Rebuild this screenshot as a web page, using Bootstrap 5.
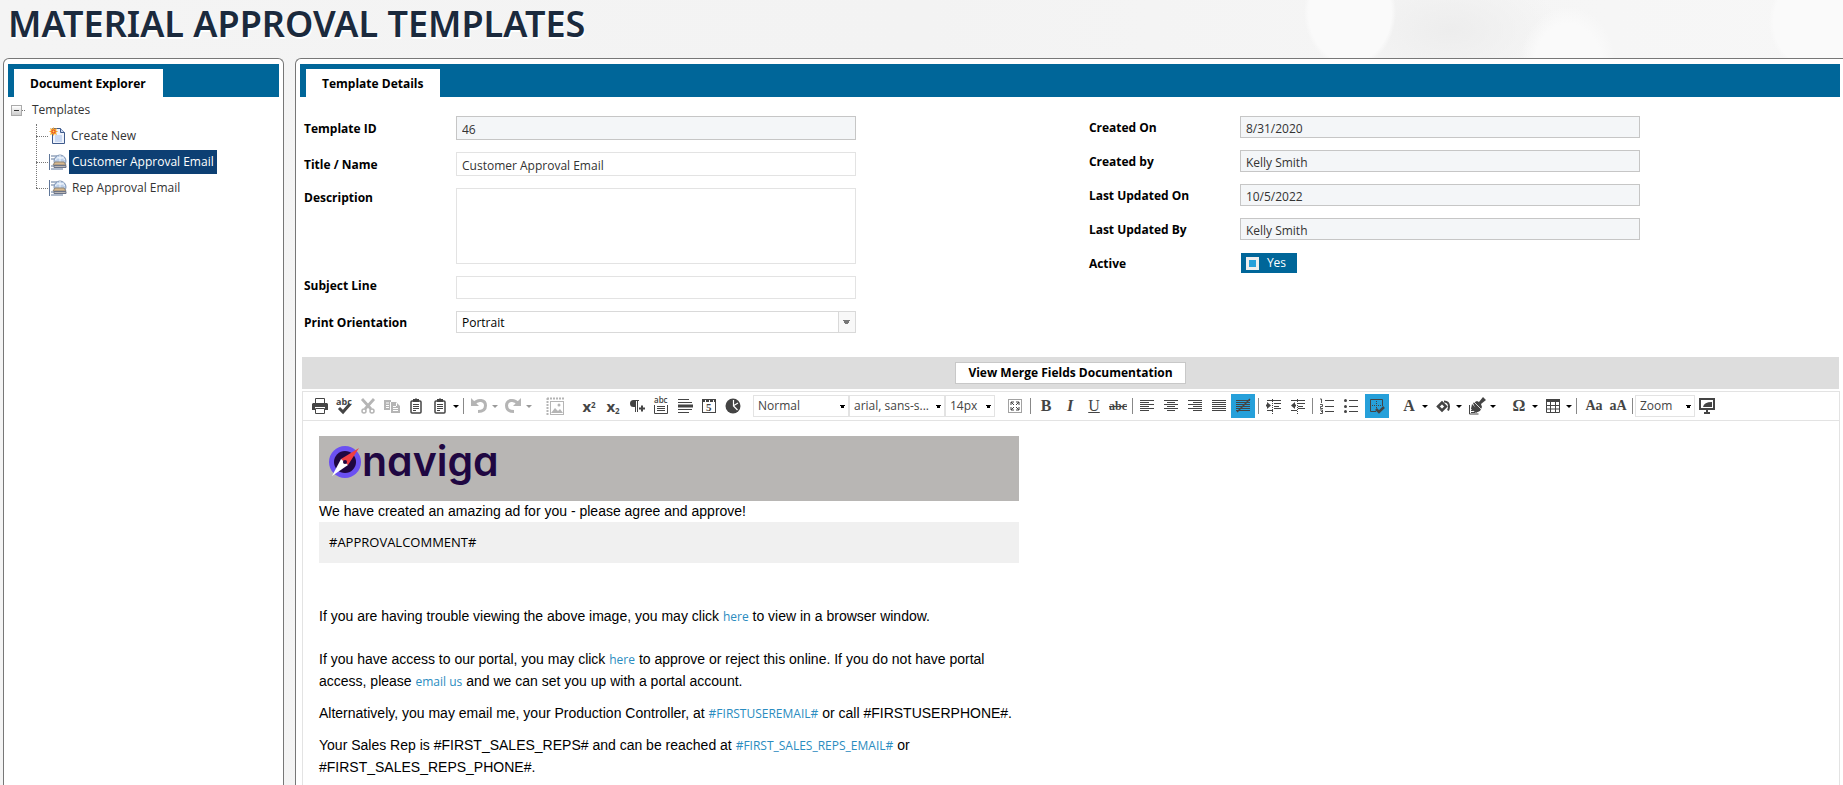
<!DOCTYPE html>
<html lang="en">
<head>
<meta charset="utf-8">
<meta name="viewport" content="width=device-width, initial-scale=1">
<title>Material Approval Templates</title>
<link href="https://cdn.jsdelivr.net/npm/bootstrap@5.3.0/dist/css/bootstrap.min.css" rel="stylesheet">
<style>
:root{--brand:#006699;--line:#e3e3e3;--ink:#444;--ui:"Open Sans","Noto Sans",sans-serif}
body{font-family:var(--ui);font-size:12px;line-height:18px;color:#333;
 background:
 radial-gradient(ellipse 46px 56px at 1350px 12px,#fafafa 90%,transparent),
 radial-gradient(ellipse 48px 60px at 1568px 66px,#fafafa 70%,transparent),
 radial-gradient(ellipse 46px 50px at 1815px 22px,#fafafa 90%,transparent),
 radial-gradient(ellipse 110px 60px at 1450px 30px,#ededed,transparent),
 linear-gradient(90deg,#f4f4f4,#f3f3f3 50%,#f7f7f7)}
.page-title{font-family:"Noto Sans",sans-serif;font-size:36px;line-height:48px;font-weight:600;color:#1b2a3d;text-shadow:1px 2px 0 #fff;white-space:nowrap;margin:0}
.title-box{height:58px;padding:0 8px;flex:none}
.pane{background:#fff;border:1px solid #777;border-bottom:0;border-radius:6px 6px 0 0;padding:5px 4px 0}
.pane-left{width:281px;flex:none;margin-left:3px}
.pane-main{margin-left:11px;border-right:0;border-top-right-radius:0;padding-right:0}
.tabstrip{background:var(--brand);height:33px;padding:5px 6px 0}
.pane-main .tabstrip{margin-right:3px}
.tabstrip .nav-link{background:#fff;color:#000;font-weight:700;height:28px;line-height:30px;padding:0 17px 0 16px;border:0;border-radius:0;font-size:12px}
/* tree */
.tree ul{list-style:none;margin:0;padding:0 0 0 28px;position:relative}
.tree-root{height:26px;padding-left:3px;display:flex;align-items:center}
.tree li.leaf{height:26px;display:flex;align-items:center}
.tree li.leaf::before{content:"";width:12px;border-top:1px dotted #777;margin-right:1px;height:1px}
.tree ul::before{content:"";position:absolute;left:28px;top:1px;height:64px;border-left:1px dotted #777}
.tree a{color:#333;text-decoration:none;padding:0 3px;line-height:24px;font-size:12px;margin-left:2px}
.tree a.active{background:#0d3f73;color:#fff}
.boxer{width:11px;height:11px;border:1px solid #aaa;background:linear-gradient(#fff,#ccc);padding:0;display:flex;align-items:center;justify-content:center}
.boxer::after{content:"";width:5px;height:1px;background:#333}
.stub{width:3px;border-top:1px dotted #777;margin-right:3px}
/* details form */
.details{padding:19px 0 0 4px}
.col-wide{flex:0 0 51%}
.frow{display:flex;align-items:center;margin-bottom:12px}
.frow>label{width:152px;flex:none;font-weight:700;color:#000;font-size:12px;padding-top:1px}
.col-meta .frow>label{width:151px}
.frow .form-control,.frow .form-select{border-radius:0;border-color:var(--line);font-size:12px;line-height:16px;color:#333;padding:2px 5px 0;height:24px;min-height:0;width:400px;box-shadow:none}
.frow .form-control:disabled{background:#f4f6f8;border-color:#c6c6c6;opacity:1}
.col-meta .frow{height:22px}
.col-meta .form-control{height:22px}
.frow textarea.form-control{height:76px;resize:none}
.short .form-control{height:23px}
.short .form-select{height:22px;color:#000;padding:1px 20px 0 5px;border-color:#d9d9d9;background-color:#fff;
 background-image:linear-gradient(#777,#777),linear-gradient(#777,#777),linear-gradient(#777,#777),linear-gradient(#d9d9d9,#d9d9d9),linear-gradient(#f8f8f8,#f8f8f8);
 background-size:7px 1px,5px 2px,3px 3px,1px 100%,17px 100%;
 background-position:right 5px top 8px,right 6px top 9px,right 7px top 9px,right 16px top,right 0 top}
.toggle-yes{background:var(--brand);color:#fff;width:56px;height:20px;margin-left:1px;display:flex;align-items:center;padding-left:5px;gap:8px;font-size:12px}
.toggle-yes input{appearance:none;width:13px;height:13px;border:3px solid #eee;background:#26a0da;margin:0}
/* merge bar */
.mergebar{background:#ddd;height:32px;margin:12px 4px 0 2px;display:flex;justify-content:center;align-items:center}
.mergebar .btn{background:#fff;border:1px solid #c8c8c8;border-radius:0;font-weight:700;color:#000;font-size:12px;line-height:20px;padding:0 12px;height:22px}
/* editor toolbar */
.editor{margin:2px 3px 0 2px;border:1px solid var(--line);border-bottom:0}
.tools{height:29px;padding-left:5px;border-bottom:1px solid var(--line);display:flex;align-items:center}
.tools .btn{width:24px;height:24px;padding:0;border:0;border-radius:0;display:flex;align-items:center;justify-content:center;flex:none;color:var(--ink)}
.tools .btn.on{background:#26a0da}
.tools .btn.dim{color:#b5b5b5}
.tools .btn.drop{width:8px;color:#000}
.tools .btn.drop.dim{color:#999}
.tools .drop::after{content:"";border:3px solid transparent;border-top-color:currentColor;border-bottom:0}
.tools svg{width:16px;height:16px;fill:none;stroke:currentColor;display:block}
.tools svg .f{fill:currentColor;stroke:none}
.tools svg.big{width:18px;height:18px}
.bar{width:7px;height:16px;flex:none;display:flex;justify-content:center}
.bar::before{content:"";width:1px;background:#888}
.bar.tight{width:5px}
.g2{margin-left:2px}.g8{margin-left:8px}.g10{margin-left:10px}
.tools select{height:22px;border:1px solid var(--line);appearance:none;font-size:12px;color:#444;padding:0 12px 0 4px;flex:none;text-overflow:ellipsis;overflow:hidden;white-space:nowrap;border-radius:0;
 background:#fff no-repeat;
 background-image:linear-gradient(#000,#000),linear-gradient(#000,#000);background-size:5px 1px,3px 2px;background-position:right 3px top 9px,right 4px top 10px}
.w96{width:96px}.w50{width:50px}.w60{width:60px}
.serif-ico{font-family:"Liberation Serif",serif;font-weight:700;font-size:16px;line-height:20px}
.sans-ico{font-family:"Open Sans",sans-serif;font-weight:700;font-size:15px;line-height:20px}
.sans-ico sup,.sans-ico sub{font-size:8px}
.cond{font-size:14px}
.strike{text-decoration:line-through;font-size:12px}
.light{font-weight:400}
/* message body */
.canvas{padding:15px 16px 20px}
.mail{max-width:700px;font-family:"Liberation Sans",Arial,sans-serif;font-size:14px;line-height:22px;color:#000}
.mail-head{background:#b8b6b4;height:65px;padding:9px 10px;display:flex;align-items:flex-start}
.logo-word{font-family:"Inter",sans-serif;font-feature-settings:"cv11";font-weight:600;font-size:41px;line-height:32px;margin-left:1px;color:#1f0742}
.mail-lead{line-height:20px}
.mail-note{background:#f0f0f0;height:41px;padding:0 10px;line-height:41px;font-family:var(--ui);font-size:13px;margin-bottom:42px;margin-top:1px}
.mail p{margin:0 0 10px}
.mail p.wide-gap{margin-bottom:21px}
.mail a{color:#2a8cc0;text-decoration:none;font-family:var(--ui);font-size:12px;line-height:16px}
</style>
</head>
<body class="vh-100 overflow-hidden d-flex flex-column">
<header class="title-box"><h1 class="page-title">MATERIAL APPROVAL TEMPLATES</h1></header>
<div class="d-flex flex-grow-1">
<aside class="pane pane-left">
 <div class="tabstrip nav"><a class="nav-link" href="#explorer">Document Explorer</a></div>
 <nav class="tree" id="explorer">
  <div class="tree-root"><button class="boxer" type="button" aria-label="Collapse"></button><span class="stub"></span><span class="ps-1">Templates</span></div>
  <ul>
   <li class="leaf"><svg width="17" height="18" viewBox="0 0 17 18"><path d="M3.500 1.500h8l4 4v11h-12z" fill="#eef3fc" stroke="#3e5a8c"/><path d="M11.500 1.500v4h4" fill="#c8d6ef" stroke="#3e5a8c"/><path d="M6 8h7v7H6z" fill="#c9d8f2"/><path d="M4.500 0l1 2 2.500-1-1 2.500 2 1-2 1 1 2.500-2.500-1-1 2-1-2-2.500 1 1-2.500-2-1 2-1-1-2.500 2.500 1z" fill="#f6a62c"/><circle cx="4.500" cy="4.500" r="2" fill="#e8442a"/><circle cx="4.500" cy="4.500" r="1" fill="#ffe14a"/></svg><a href="#new">Create New</a></li>
   <li class="leaf"><svg width="18" height="18" viewBox="0 0 18 18"><path d="M0.500 1v16M2 3h6M2 6h4M2 13h3M2 16h12" stroke="#5f7699" fill="none"/><circle cx="11" cy="8" r="6" fill="#b9cce6" stroke="#8296b4"/><path d="M6 7q5-5 10 0M8 4q3 3 7 0M11 2v7" stroke="#eef4fb" fill="none"/><path d="M6 9h9l2 3H4z" fill="#d9b98e" stroke="#8d8577"/><path d="M5 12.500h12v2H5z" fill="#b9b6b4" stroke="#6c7488"/></svg><a class="active" href="#customer">Customer Approval Email</a></li>
   <li class="leaf"><svg width="18" height="18" viewBox="0 0 18 18"><path d="M0.500 1v16M2 3h6M2 6h4M2 13h3M2 16h12" stroke="#5f7699" fill="none"/><circle cx="11" cy="8" r="6" fill="#b9cce6" stroke="#8296b4"/><path d="M6 7q5-5 10 0M8 4q3 3 7 0M11 2v7" stroke="#eef4fb" fill="none"/><path d="M6 9h9l2 3H4z" fill="#d9b98e" stroke="#8d8577"/><path d="M5 12.500h12v2H5z" fill="#b9b6b4" stroke="#6c7488"/></svg><a href="#rep">Rep Approval Email</a></li>
  </ul>
 </nav>
</aside>
<main class="pane pane-main flex-grow-1">
 <div class="tabstrip nav"><a class="nav-link" href="#details">Template Details</a></div>
 <form class="details d-flex" id="details">
  <div class="col-wide">
   <div class="frow"><label for="tid">Template ID</label><input id="tid" class="form-control" value="46" disabled></div>
   <div class="frow"><label for="tname">Title / Name</label><input id="tname" class="form-control" value="Customer Approval Email"></div>
   <div class="frow align-items-start"><label for="tdesc">Description</label><textarea id="tdesc" class="form-control"></textarea></div>
   <div class="frow short align-items-start"><label for="tsub">Subject Line</label><input id="tsub" class="form-control"></div>
   <div class="frow short"><label for="tori">Print Orientation</label><select id="tori" class="form-select"><option>Portrait</option><option>Landscape</option></select></div>
  </div>
  <div class="col-meta">
   <div class="frow"><label for="con">Created On</label><input id="con" class="form-control" value="8/31/2020" disabled></div>
   <div class="frow"><label for="cby">Created by</label><input id="cby" class="form-control" value="Kelly Smith" disabled></div>
   <div class="frow"><label for="uon">Last Updated On</label><input id="uon" class="form-control" value="10/5/2022" disabled></div>
   <div class="frow"><label for="uby">Last Updated By</label><input id="uby" class="form-control" value="Kelly Smith" disabled></div>
   <div class="frow"><label for="act">Active</label><span class="toggle-yes"><input id="act" type="checkbox" checked><span>Yes</span></span></div>
  </div>
 </form>
 <div class="mergebar"><button class="btn" type="button">View Merge Fields Documentation</button></div>
 <section class="editor">
  <div class="tools" role="toolbar" aria-label="Editor">
   <button class="btn" type="button" aria-label="Print"><svg viewBox="0 0 16 16"><path d="M3.500 5V.5h9V5"/><path class="f" d="M1 5h14l1 1v6h-3V9H3v3H0V6z"/><path d="M3.500 10.500h9v5h-9z"/></svg></button>
   <button class="btn" type="button" aria-label="Spelling"><svg viewBox="0 0 16 16" overflow="visible"><text x="0" y="7" class="f" font-family="Open Sans" font-size="9" font-weight="700">abc</text><path d="M3 10l4 4 7-8" stroke-width="3"/></svg></button>
   <button class="btn dim" type="button" aria-label="Cut"><svg viewBox="0 0 16 16"><path d="M2 1l9 10M14 1L5 11" stroke-width="2.800"/><circle cx="4" cy="13" r="2" stroke-width="1.500"/><circle cx="12" cy="13" r="2" stroke-width="1.500"/></svg></button>
   <button class="btn dim" type="button" aria-label="Copy"><svg viewBox="0 0 16 16"><path class="f" d="M0 2h7v2H6v8H0z"/><path d="M2 5h3M2 7.500h3M2 9.500h3" stroke="#fff"/><path class="f" d="M7 4h5l4 4v7H7z"/><path d="M9 8.500h3M9 10.500h5M9 12.500h5M12.500 5v3" stroke="#fff"/></svg></button>
   <button class="btn" type="button" aria-label="Paste"><svg viewBox="0 0 16 16"><rect x="3" y="3" width="10" height="12" rx="1" stroke-width="1.500"/><path class="f" d="M5 1h2l1-1 1 1h2v3H5z"/><path d="M5 6.500h6M5 8.500h6M5 10.500h6M5 12.500h3"/></svg></button>
   <button class="btn" type="button" aria-label="Paste special"><svg viewBox="0 0 16 16"><rect x="3" y="3" width="10" height="12" rx="1" stroke-width="1.500"/><path class="f" d="M5 1h2l1-1 1 1h2v3H5z"/><path d="M5 6.500h6M5 8.500h6M5 10.500h6M5 12.500h3"/></svg></button>
   <button class="btn drop" type="button" aria-label="Paste options"></button>
   <span class="bar"></span>
   <button class="btn dim" type="button" aria-label="Undo"><svg viewBox="0 0 16 16"><path d="M3 5.500C7 .5 14.500 2 14.500 7.500S10 13.500 7 13.500" stroke-width="3"/><path class="f" d="M0 0v8h8z"/></svg></button>
   <button class="btn drop dim" type="button" aria-label="Undo list"></button>
   <button class="btn dim g2" type="button" aria-label="Redo"><svg viewBox="0 0 16 16"><path d="M13 5.500C9 .5 1.500 2 1.500 7.500S6 13.500 9 13.500" stroke-width="3"/><path class="f" d="M16 0v8H8z"/></svg></button>
   <button class="btn drop dim" type="button" aria-label="Redo list"></button>
   <button class="btn dim g10" type="button" aria-label="Image"><svg class="big" viewBox="0 0 18 18"><path d="M1 1.500h17M1.500 1v17" stroke-dasharray="2 1" stroke-width="2"/><rect x="4.500" y="4.500" width="13" height="13"/><path class="f" d="M5 16l4-5 3 3 2-2 3 4z"/><circle class="f" cx="13" cy="8" r="1.500"/></svg></button>
   <button class="btn g10 sans-ico" type="button" aria-label="Superscript"><span>x<sup>2</sup></span></button>
   <button class="btn sans-ico" type="button" aria-label="Subscript"><span>x<sub>2</sub></span></button>
   <button class="btn" type="button" aria-label="New paragraph"><svg viewBox="0 0 16 16"><path class="f" d="M4.500 2a3.500 3.500 0 000 7H6V2z"/><path d="M5 2.500h5M6.500 2v12M8.500 2v12"/><path d="M10 10.500h6M13 7.500v6" stroke-width="2"/></svg></button>
   <button class="btn" type="button" aria-label="Comment"><svg viewBox="0 0 16 16" overflow="visible"><text x="1" y="5" class="f" font-family="Open Sans" font-size="8" font-weight="600">abc</text><path d="M1.500 7v8.500h13V7M4 8.500h8M4 10.500h8M4 12.500h8"/></svg></button>
   <button class="btn" type="button" aria-label="Rule"><svg viewBox="0 0 16 16"><path d="M1 1.500h11M1 4.500h14M1 11.500h14M1 14.500h11"/><path d="M1 8h15" stroke-width="3"/></svg></button>
   <button class="btn" type="button" aria-label="Date"><svg viewBox="0 0 16 16"><rect x="1.500" y="1.500" width="13" height="13"/><path d="M1 3h14" stroke-width="2" stroke-dasharray="3 1"/><text x="5" y="13" class="f" font-family="Liberation Serif" font-size="11" font-weight="700">5</text></svg></button>
   <button class="btn" type="button" aria-label="Time"><svg viewBox="0 0 16 16"><circle class="f" cx="8" cy="8" r="7.500"/><path d="M8.500 2v6l4 4M8 8l5-3" stroke="#fff" stroke-width="1.200"/></svg></button>
   <select class="w96 g8" aria-label="Paragraph style"><option>Normal</option></select>
   <select class="w96" aria-label="Font name"><option>arial, sans-s...</option></select>
   <select class="w50" aria-label="Font size"><option>14px</option></select>
   <button class="btn g8" type="button" aria-label="Full screen"><svg viewBox="0 0 16 16"><rect x="1.500" y="1.500" width="13" height="13" stroke-dasharray="1 1"/><path d="M4 7V4h3M9 4h3v3M12 9v3H9M7 12H4V9M4 4l3 3M12 4L9 7M12 12L9 9M4 12l3-3"/></svg></button>
   <span class="bar"></span>
   <button class="btn serif-ico" type="button" aria-label="Bold">B</button>
   <button class="btn serif-ico" type="button" aria-label="Italic"><i>I</i></button>
   <button class="btn serif-ico light" type="button" aria-label="Underline"><u>U</u></button>
   <button class="btn serif-ico strike" type="button" aria-label="Strikethrough">abc</button>
   <span class="bar tight"></span>
   <button class="btn" type="button" aria-label="Align left"><svg viewBox="0 0 16 16"><path d="M1 2.500h14M1 4.500h9M1 6.500h14M1 8.500h9M1 10.500h14M1 12.500h9"/></svg></button>
   <button class="btn" type="button" aria-label="Align center"><svg viewBox="0 0 16 16"><path d="M1 2.500h14M4 4.500h8M1 6.500h14M4 8.500h8M1 10.500h14M4 12.500h8"/></svg></button>
   <button class="btn" type="button" aria-label="Align right"><svg viewBox="0 0 16 16"><path d="M1 2.500h14M6 4.500h9M1 6.500h14M6 8.500h9M1 10.500h14M6 12.500h9"/></svg></button>
   <button class="btn" type="button" aria-label="Justify"><svg viewBox="0 0 16 16"><path d="M1 2.500h14M1 4.500h14M1 6.500h14M1 8.500h14M1 10.500h14M1 12.500h14"/></svg></button>
   <button class="btn on" type="button" aria-label="No alignment"><svg viewBox="0 0 16 16"><path d="M1 2.500h14M1 4.500h14M1 6.500h14M1 8.500h14M1 10.500h14M1 12.500h14"/><path d="M2 14L15 1" stroke-width="1.500"/></svg></button>
   <span class="bar"></span>
   <button class="btn" type="button" aria-label="Indent"><svg viewBox="0 0 16 16"><path d="M1 2.500h14M8 5.500h7M8 8.500h5M8 10.500h7M1 12.500h6"/><path d="M6.500 1v15" stroke-dasharray="1 1"/><path class="f" d="M1 4l4 3.500L1 11z"/><path d="M0 7.500h3" stroke-width="2"/></svg></button>
   <button class="btn" type="button" aria-label="Outdent"><svg viewBox="0 0 16 16"><path d="M1 2.500h14M8 5.500h7M8 8.500h5M8 10.500h7M1 12.500h6"/><path d="M7.500 1v15" stroke-dasharray="1 1"/><path class="f" d="M5 4L1 7.500 5 11z"/><path d="M3 7.500h3" stroke-width="2"/></svg></button>
   <span class="bar tight"></span>
   <button class="btn" type="button" aria-label="Numbered list"><svg viewBox="0 0 16 16"><path d="M6 2.500h9M6 8.500h9M6 13.500h9"/><path d="M1 1h1.500V5M1 6.500h2.500v2H1.500v2H4M1 12h2.500v3.500H1M2 13.500h1.500" stroke-width=".9"/></svg></button>
   <button class="btn" type="button" aria-label="Bullet list"><svg viewBox="0 0 16 16"><path d="M6 2.500h9M6 8.500h9M6 13.500h9"/><circle class="f" cx="2.500" cy="2.500" r="1.500"/><circle class="f" cx="2.500" cy="8.500" r="1.500"/><circle class="f" cx="2.500" cy="13.500" r="1.500"/></svg></button>
   <button class="btn on g2" type="button" aria-label="Show borders"><svg viewBox="0 0 16 16"><path d="M7 13.500H1.500v-12h12V8"/><path d="M7.500 3v8M3 7.500h10" stroke-dasharray="1 1"/><path d="M7 11l3 3 5-5" stroke-width="2.500"/></svg></button>
   <button class="btn g8 serif-ico" type="button" aria-label="Text color">A</button>
   <button class="btn drop" type="button" aria-label="Text colors"></button>
   <button class="btn g2" type="button" aria-label="Fill color"><svg viewBox="0 0 16 16"><path d="M3 8.500l4-4 4 4-4 4z" stroke-width="2.500"/><path d="M9 3.500q5 0 5 5 0 2-1 4" stroke-width="2"/></svg></button>
   <button class="btn drop" type="button" aria-label="Fill colors"></button>
   <button class="btn g2" type="button" aria-label="Format stripper"><svg class="big" viewBox="0 0 18 18"><path class="f" d="M5 6l4-2 2 1 4-5 3 3-5 4 1 3-2 4-3 1z"/><path class="f" d="M4 7l7 7-3 2-5-4z"/><path d="M6 5l7 7" stroke="#fff" stroke-width=".8"/><path d="M1.500 8v9h9M3 13.500h2M3 15.500h4"/></svg></button>
   <button class="btn drop" type="button" aria-label="Stripper options"></button>
   <button class="btn g10 serif-ico" type="button" aria-label="Symbol">Ω</button>
   <button class="btn drop" type="button" aria-label="Symbols"></button>
   <button class="btn g2" type="button" aria-label="Table"><svg viewBox="0 0 16 16"><path class="f" d="M1 1h14v3H1z"/><path d="M1.500 1.500h13v13h-13zM1 7.500h14M1 11h14M5.500 4v11M10.500 4v11"/></svg></button>
   <button class="btn drop" type="button" aria-label="Table options"></button>
   <span class="bar"></span>
   <button class="btn g2 serif-ico cond" type="button" aria-label="Lower case">Aa</button>
   <button class="btn serif-ico cond" type="button" aria-label="Upper case">aA</button>
   <span class="bar tight"></span>
   <select class="w60" aria-label="Zoom"><option>Zoom</option></select>
   <button class="btn" type="button" aria-label="Preview"><svg viewBox="0 0 16 16"><rect x="1" y="1" width="14" height="10" stroke-width="2"/><path class="f" d="M4 9q1-5 9-5v5zM5 14h6v2H5zM7 12h2v2H7z"/></svg></button>
  </div>
  <div class="canvas">
   <article class="mail">
    <div class="mail-head"><svg width="32" height="34" viewBox="0 0 32 34"><circle cx="16" cy="17" r="16" fill="#6b50f2"/><circle cx="16" cy="17" r="11" fill="#1f0742"/><path d="M30 3L12 14l7 6z" fill="#ef3e42"/><path d="M3 31l9-17 7 6z" fill="#fff"/><circle cx="16" cy="17" r="2" fill="#1f0742"/></svg><span class="logo-word">naviga</span></div>
    <div class="mail-lead">We have created an amazing ad for you - please agree and approve!</div>
    <div class="mail-note">#APPROVALCOMMENT#</div>
    <p class="wide-gap">If you are having trouble viewing the above image, you may click <a href="#view">here</a> to view in a browser window.</p>
    <p>If you have access to our portal, you may click <a href="#portal">here</a> to approve or reject this online. If you do not have portal access, please <a href="#mail">email us</a> and we can set you up with a portal account.</p>
    <p>Alternatively, you may email me, your Production Controller, at <a href="#user">#FIRSTUSEREMAIL#</a> or call #FIRSTUSERPHONE#.</p>
    <p>Your Sales Rep is #FIRST_SALES_REPS# and can be reached at <a href="#rep">#FIRST_SALES_REPS_EMAIL#</a> or #FIRST_SALES_REPS_PHONE#.</p>
   </article>
  </div>
 </section>
</main>
</div>
<script src="https://cdn.jsdelivr.net/npm/bootstrap@5.3.0/dist/js/bootstrap.bundle.min.js"></script>
</body>
</html>
